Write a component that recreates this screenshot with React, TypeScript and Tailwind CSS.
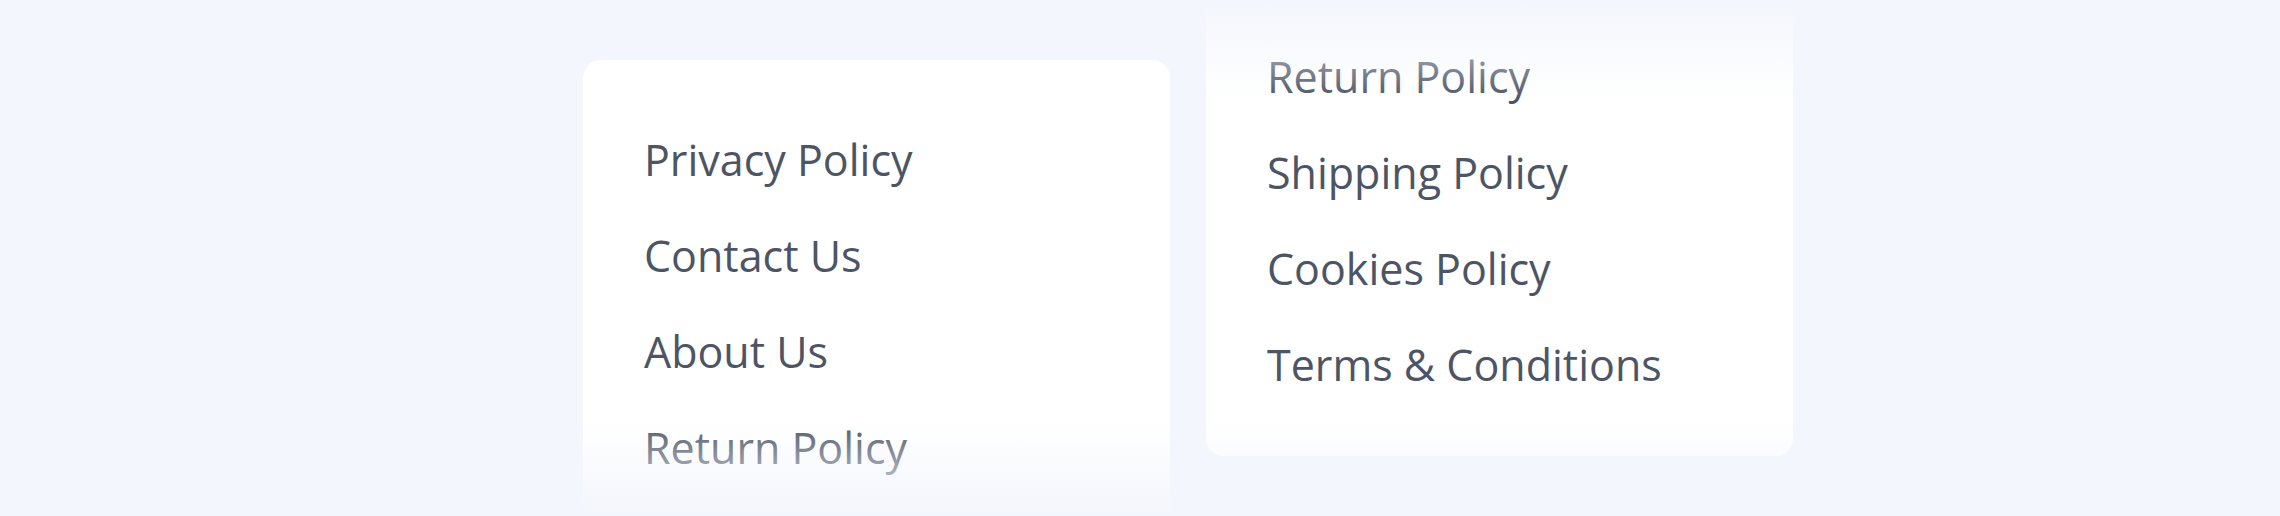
import React from 'react';

const leftLinks = ['Privacy Policy', 'Contact Us', 'About Us', 'Return Policy'];
const rightLinks = ['Return Policy', 'Shipping Policy', 'Cookies Policy', 'Terms & Conditions'];

function LinkItem({ label }: { label: string }) {
  return (
    <li>
      <a href="#" className="block h-[96px] leading-[96px] text-[43px] text-[#4d5565] whitespace-nowrap">
        {label}
      </a>
    </li>
  );
}

export default function App() {
  return (
    <div className="h-[516px] overflow-hidden bg-[#f3f6fc] font-['Open_Sans',sans-serif]">
      <div className="flex items-start gap-[36px] pl-[583px]">
        {/* Left column, fades out at the bottom */}
        <div className="relative mt-[60px] w-[587px] rounded-[18px] bg-white pt-[52px] pb-[43px] pl-[61px]">
          <ul>
            {leftLinks.map((l) => (
              <LinkItem key={l} label={l} />
            ))}
          </ul>
          <div className="pointer-events-none absolute inset-x-0 top-[360px] h-[96px] bg-gradient-to-b from-transparent via-[#f3f6fc]/50 to-[#f3f6fc]" />
        </div>

        {/* Right column, fades in at the top */}
        <div className="relative w-[587px] rounded-b-[18px] bg-white pt-[29px] pb-[43px] pl-[61px]">
          <ul>
            {rightLinks.map((l) => (
              <LinkItem key={l} label={l} />
            ))}
          </ul>
          <div className="pointer-events-none absolute inset-x-0 top-0 h-[100px] bg-gradient-to-b from-[#f3f6fc] via-[#f3f6fc]/50 to-transparent" />
          <div className="pointer-events-none absolute inset-x-0 bottom-0 h-[36px] rounded-b-[18px] bg-gradient-to-b from-transparent to-[#f3f6fc]/40" />
        </div>
      </div>
    </div>
  );
}
